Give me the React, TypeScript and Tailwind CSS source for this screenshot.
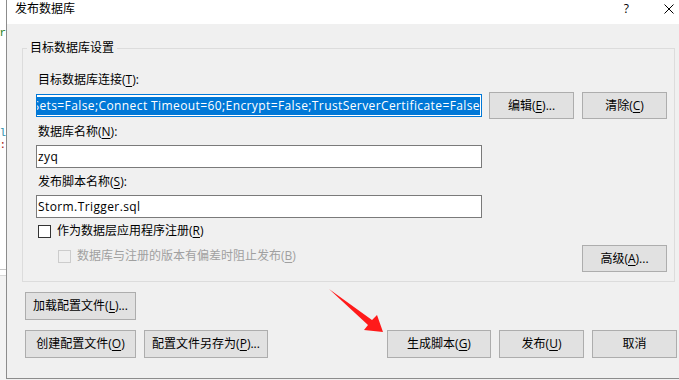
import React from "react";

const FONT = "font-['Open_Sans','Noto_Sans_CJK_SC',sans-serif]";

function U({ k }: { k: string }) {
  return <span className="underline underline-offset-[2px]">{k}</span>;
}

function Btn({
  w,
  h = "h-[27px]",
  children,
}: {
  w: string;
  h?: string;
  children: React.ReactNode;
}) {
  return (
    <button
      type="button"
      className={`${w} ${h} flex shrink-0 items-center justify-center border border-[#adadad] bg-[#e1e1e1] text-[12px] leading-[16px] text-black`}
    >
      {children}
    </button>
  );
}

function TextBox({ value }: { value: string }) {
  return (
    <div className="flex h-[23px] w-[446px] items-center border border-[#7a7a7a] bg-white pl-[1px] text-[12px] leading-[16px] tracking-[0.4px] text-black">
      {value}
    </div>
  );
}

export default function App() {
  return (
    <div
      className={`relative flex h-[380px] w-[679px] overflow-hidden bg-[#f0f0f0] ${FONT}`}
    >
      {/* window behind the dialog */}
      <div className="flex w-[6px] shrink-0 flex-col overflow-hidden bg-white font-['Liberation_Mono',monospace] text-[11px] leading-[12px]">
        <div className="mt-[27px] flex justify-end whitespace-nowrap text-[#1a7f1a]">
          var
        </div>
        <div className="mt-[88px] flex justify-end whitespace-nowrap text-[#2b91af]">
          el
        </div>
        <div className="flex justify-end whitespace-nowrap text-[#a31515]">
          (:
        </div>
        <div className="mt-[118px] h-[1px] bg-[#c8c8c8]" />
        <div className="mt-[5px] h-[1px] bg-[#d8d8d8]" />
        <div className="flex-1 bg-[#f3f3f3]" />
      </div>

      {/* dialog */}
      <div className="flex h-[379px] flex-1 flex-col border-b border-l border-[#8c8c8c] bg-[#f0f0f0]">
        <div className="flex h-[24px] shrink-0 items-start bg-white pl-[8px] pt-[1px] text-[12px] leading-[16px] text-black">
          <span>发布数据库</span>
          <span className="ml-auto mr-[35px] text-[12px] leading-[16px]">?</span>
          <svg
            width="10"
            height="10"
            viewBox="0 0 10 10"
            className="mr-[5px] mt-[3px]"
          >
            <path d="M0.5 0.5 L9.5 9.5 M9.5 0.5 L0.5 9.5" stroke="#000" strokeWidth="1" />
          </svg>
        </div>

        {/* group box */}
        <div className="relative ml-[15px] mt-[24px] flex h-[234px] w-[653px] flex-col border border-[#dcdcdc] pl-[13px] pr-[7px] pt-[23px] text-[12px] leading-[16px] text-black">
          <span className="absolute left-[4px] top-[-9px] bg-[#f0f0f0] px-[3px]">
            目标数据库设置
          </span>

          <div className="ml-[2px]">
            目标数据库连接(<U k="T" />):
          </div>
          <div className="mt-[4px] flex h-[27px] items-center">
            <div className="flex h-[23px] w-[446px] items-center justify-end overflow-hidden border border-[#0078d7] bg-white px-[1px]">
              <span className="flex h-[18px] shrink-0 items-center whitespace-nowrap bg-[#0078d7] tracking-[0.4px] text-white">
                Data Source=.;Integrated Security=True;MultipleActiveResultSets=False;Connect
                Timeout=60;Encrypt=False;TrustServerCertificate=False
              </span>
            </div>
            <div className="ml-[7px]">
              <Btn w="w-[85px]">
                编辑(<U k="E" />)...
              </Btn>
            </div>
            <div className="ml-[8px]">
              <Btn w="w-[85px]">
                清除(<U k="C" />)
              </Btn>
            </div>
          </div>

          <div className="ml-[2px] mt-[5px]">
            数据库名称(<U k="N" />):
          </div>
          <div className="mt-[5px]">
            <TextBox value="zyq" />
          </div>

          <div className="ml-[2px] mt-[6px]">
            发布脚本名称(<U k="S" />):
          </div>
          <div className="mt-[5px]">
            <TextBox value="Storm.Trigger.sql" />
          </div>

          <div className="ml-[2px] mt-[5px] flex h-[16px] items-center">
            <span className="h-[13px] w-[13px] border border-[#333333] bg-white" />
            <span className="ml-[6px]">
              作为数据层应用程序注册(<U k="R" />)
            </span>
          </div>

          <div className="mt-[6px] flex items-start justify-between">
            <div className="ml-[22px] mt-[3px] flex h-[16px] items-center text-[#a0a0a0]">
              <span className="h-[13px] w-[13px] border border-[#cccccc]" />
              <span className="ml-[6px]">
                数据库与注册的版本有偏差时阻止发布(<U k="B" />)
              </span>
            </div>
            <Btn w="w-[85px]">
              高级(<U k="A" />)...
            </Btn>
          </div>
        </div>

        {/* bottom buttons */}
        <div className="ml-[18px] mt-[10px] flex">
          <Btn w="w-[111px]" h="h-[28px]">
            加载配置文件(<U k="L" />)...
          </Btn>
        </div>
        <div className="ml-[18px] mr-[2px] mt-[10px] flex justify-between">
          <div className="flex gap-[8px]">
            <Btn w="w-[111px]" h="h-[28px]">
              创建配置文件(<U k="O" />)
            </Btn>
            <Btn w="w-[124px]" h="h-[28px]">
              配置文件另存为(<U k="P" />)...
            </Btn>
          </div>
          <div className="flex gap-[8px]">
            <Btn w="w-[104px]" h="h-[28px]">
              生成脚本(<U k="G" />)
            </Btn>
            <Btn w="w-[85px]" h="h-[28px]">
              发布(<U k="U" />)
            </Btn>
            <Btn w="w-[85px]" h="h-[28px]">
              取消
            </Btn>
          </div>
        </div>
      </div>

      {/* red annotation arrow */}
      <svg
        className="pointer-events-none absolute left-0 top-0"
        width="679"
        height="380"
        viewBox="0 0 679 380"
      >
        <polygon
          points="329,289 372,320 377,315 383,332 364,330 368,325"
          fill="#ff1a1a"
        />
      </svg>
    </div>
  );
}
